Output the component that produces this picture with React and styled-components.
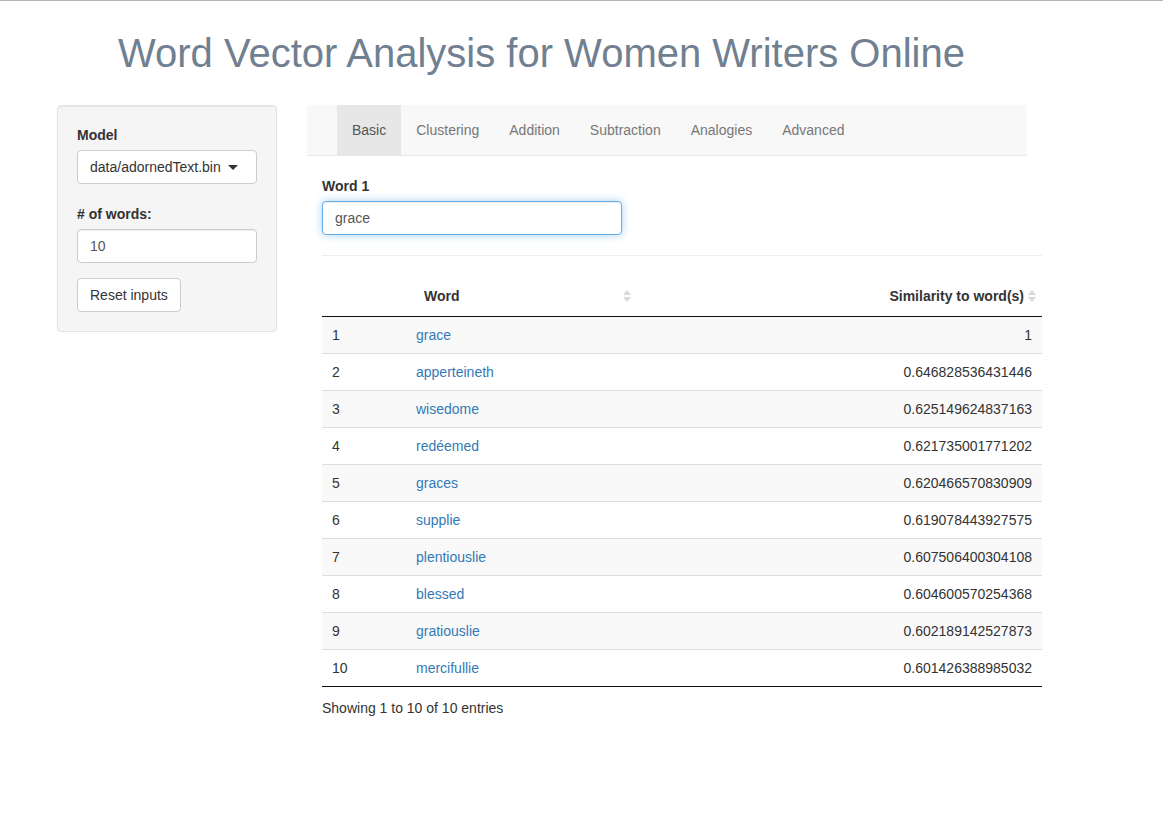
import React from 'react';
import styled, { createGlobalStyle } from 'styled-components';

const Global = createGlobalStyle`
  body {
    margin: 0;
    border-top: 1px solid #b5b5b5;
    font-family: "Liberation Sans", Arial, sans-serif;
    font-size: 14px;
    line-height: 20px;
    color: #333;
    background: #fff;
  }
  * { box-sizing: border-box; }
`;

const Title = styled.h1`
  margin: 0;
  padding: 28px 0 0 118px;
  height: 104px;
  font-size: 40px;
  font-weight: 400;
  line-height: 48px;
  color: #708090;
`;

const Layout = styled.div`
  display: flex;
  align-items: flex-start;
  padding-left: 57px;
`;

const Well = styled.div`
  width: 220px;
  padding: 19px;
  background: #f5f5f5;
  border: 1px solid #e3e3e3;
  border-radius: 4px;
  box-shadow: inset 0 1px 1px rgba(0, 0, 0, 0.05);
`;

const Label = styled.label`
  display: block;
  font-weight: 700;
  margin-bottom: 5px;
`;

const Group = styled.div`
  margin-bottom: ${p => p.gap || 15}px;
`;

const Select = styled.div`
  display: flex;
  align-items: center;
  justify-content: space-between;
  height: 34px;
  padding: 0 18px 0 12px;
  background: #fff;
  border: 1px solid #ccc;
  border-radius: 4px;
`;

const Caret = styled.span`
  width: 0;
  height: 0;
  border-left: 5px solid transparent;
  border-right: 5px solid transparent;
  border-top: 5px solid #333;
`;

const Input = styled.div`
  width: ${p => p.width || '100%'};
  height: 34px;
  padding: 6px 12px;
  background: #fff;
  border: 1px solid ${p => (p.focus ? '#66afe9' : '#ccc')};
  border-radius: 4px;
  color: #555;
  box-shadow: inset 0 1px 1px rgba(0, 0, 0, 0.075)
    ${p => (p.focus ? ', 0 0 8px rgba(102, 175, 233, 0.6)' : '')};
`;

const Button = styled.button`
  font: inherit;
  color: #333;
  height: 34px;
  padding: 6px 12px;
  background: #fff;
  border: 1px solid #ccc;
  border-radius: 4px;
`;

const Main = styled.div`
  margin-left: 30px;
  width: 750px;
`;

const Navbar = styled.nav`
  display: flex;
  width: 720px;
  height: 51px;
  padding-left: 30px;
  background: #f8f8f8;
  border-bottom: 1px solid #e7e7e7;
`;

const Tab = styled.a`
  display: flex;
  align-items: center;
  height: 50px;
  padding: 0 15px;
  color: ${p => (p.active ? '#555' : '#777')};
  background: ${p => (p.active ? '#e7e7e7' : 'transparent')};
  text-decoration: none;
`;

const Content = styled.div`
  padding: 20px 0 0 15px;
  width: 735px;
`;

const Rule = styled.hr`
  margin: 20px 0;
  border: 0;
  border-top: 1px solid #eee;
`;

const Table = styled.table`
  width: 720px;
  border-collapse: collapse;
  table-layout: fixed;
  border-bottom: 1px solid #111;
`;

const Th = styled.th`
  position: relative;
  height: 40px;
  padding: 10px 18px;
  font-weight: 700;
  text-align: ${p => p.align || 'left'};
  border-bottom: 1px solid #111;
`;

const Row = styled.tr`
  background: ${p => (p.odd ? '#f9f9f9' : '#fff')};
`;

const Td = styled.td`
  padding: 8px 10px;
  text-align: ${p => p.align || 'left'};
  tr + tr > & { border-top: 1px solid #ddd; }
`;

const WordLink = styled.a`
  color: #337ab7;
  text-decoration: none;
`;

const SortIcon = styled.svg`
  position: absolute;
  right: 6px;
  top: 14px;
`;

const Info = styled.div`
  padding-top: 11px;
`;

const tabs = ['Basic', 'Clustering', 'Addition', 'Subtraction', 'Analogies', 'Advanced'];

const rows = [
  ['grace', '1'],
  ['apperteineth', '0.646828536431446'],
  ['wisedome', '0.625149624837163'],
  ['redéemed', '0.621735001771202'],
  ['graces', '0.620466570830909'],
  ['supplie', '0.619078443927575'],
  ['plentiouslie', '0.607506400304108'],
  ['blessed', '0.604600570254368'],
  ['gratiouslie', '0.602189142527873'],
  ['mercifullie', '0.601426388985032'],
];

const Sort = () => (
  <SortIcon width="8" height="12" viewBox="0 0 8 12">
    <path d="M4 0 L8 5 L0 5 Z" fill="#d8d8d8" />
    <path d="M0 7 L8 7 L4 12 Z" fill="#d8d8d8" />
  </SortIcon>
);

export default function App() {
  return (
    <>
      <Global />
      <Title>Word Vector Analysis for Women Writers Online</Title>
      <Layout>
        <Well>
          <Group gap={20}>
            <Label>Model</Label>
            <Select>
              <span>data/adornedText.bin</span>
              <Caret />
            </Select>
          </Group>
          <Group>
            <Label># of words:</Label>
            <Input>10</Input>
          </Group>
          <Button>Reset inputs</Button>
        </Well>
        <Main>
          <Navbar>
            {tabs.map((t, i) => (
              <Tab key={t} active={i === 0}>{t}</Tab>
            ))}
          </Navbar>
          <Content>
            <Group>
              <Label>Word 1</Label>
              <Input width="300px" focus>grace</Input>
            </Group>
            <Rule />
            <Table>
              <colgroup>
                <col style={{ width: 84 }} />
                <col style={{ width: 231 }} />
                <col style={{ width: 405 }} />
              </colgroup>
              <thead>
                <tr>
                  <Th />
                  <Th>Word<Sort /></Th>
                  <Th align="right">Similarity to word(s)<Sort /></Th>
                </tr>
              </thead>
              <tbody>
                {rows.map(([w, s], i) => (
                  <Row key={w} odd={i % 2 === 0}>
                    <Td>{i + 1}</Td>
                    <Td><WordLink href="#">{w}</WordLink></Td>
                    <Td align="right">{s}</Td>
                  </Row>
                ))}
              </tbody>
            </Table>
            <Info>Showing 1 to 10 of 10 entries</Info>
          </Content>
        </Main>
      </Layout>
    </>
  );
}
